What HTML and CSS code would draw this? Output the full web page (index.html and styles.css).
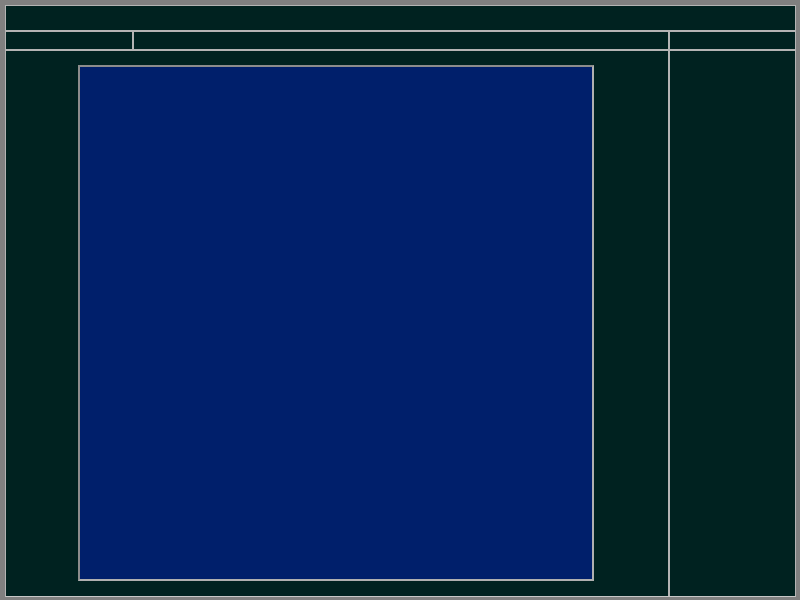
FILE: index.html
```html
<!DOCTYPE html>
<html>
<head>
<meta charset="utf-8">
<link rel="stylesheet" href="styles.css">
</head>
<body>
<div class="frame">
  <div class="cell title"></div>
  <div class="cell tabs-left"></div>
  <div class="cell tabs-mid"></div>
  <div class="cell tabs-right"></div>
  <div class="cell main">
    <div class="canvas"></div>
  </div>
  <div class="cell side"></div>
</div>
</body>
</html>
```

FILE: styles.css
```css
html, body {
  margin: 0;
  padding: 0;
  width: 800px;
  height: 600px;
  background: #808080;
  overflow: hidden;
}
body {
  padding: 5px 4px 3px 5px;
  box-sizing: border-box;
}
.frame {
  width: 791px;
  height: 592px;
  display: grid;
  grid-template-columns: 126px 534px 125px;
  grid-template-rows: 24px 17px 1fr;
  gap: 2px;
  background: #b4b4b4;
  border-left: 1px solid #b4b4b4;
  border-top: 1px solid #b4b4b4;
  border-right: 1px solid #b4b4b4;
  border-bottom: 1px solid #c8c8c8;
  box-sizing: border-box;
}
.cell {
  background: #002220;
}
.title {
  grid-column: 1 / 4;
}
.main {
  grid-column: 1 / 3;
  padding: 14px 0 0 72px;
}
.canvas {
  width: 512px;
  height: 512px;
  background: #001f6b;
  border: 2px solid #8c8c8c;
  border-right-color: #b0b0b0;
  border-bottom-color: #b0b0b0;
}
```
